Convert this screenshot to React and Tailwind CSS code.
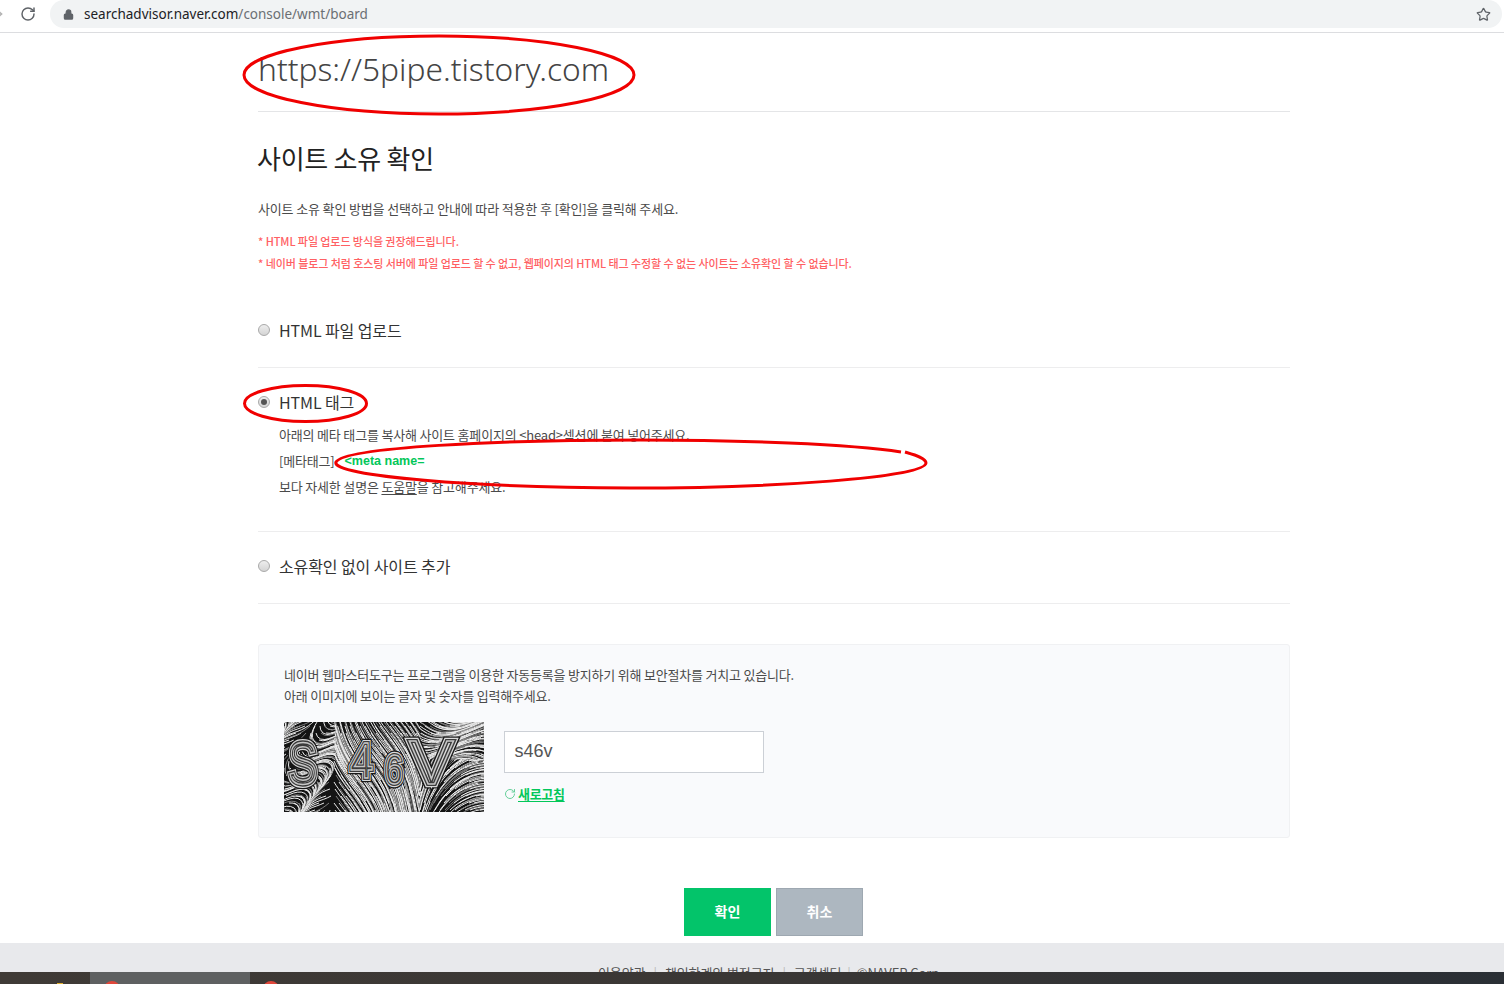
import { Lock, RotateCw, Star, ArrowRight } from 'lucide-react';

const font = { kr: "font-['Noto_Sans_CJK_KR','Noto_Sans',sans-serif]" };

// flow-field lines for the captcha picture
function captchaLines() {
  const lines = [];
  const angle = (x, y) => {
    if (x < 50) return 1.2 + 1.6 * Math.sin(x / 13 + y / 16);
    if (x > 135) {
      if (y < 38) return 0.1 + 0.5 * Math.sin(x / 18 + y / 14);
      return -1.35 + (x - 135) / 50;
    }
    return 1.15 + 0.22 * Math.sin(x / 24 + y / 34);
  };
  for (let gx = -10; gx < 210; gx += 5) {
    for (let gy = -10; gy < 100; gy += 7) {
      let x = gx + (gy % 3);
      let y = gy;
      let d = `M${x} ${y}`;
      for (let i = 0; i < 12; i++) {
        const a = angle(x, y);
        x += Math.cos(a) * 4;
        y += Math.sin(a) * 4;
        d += `L${x.toFixed(1)} ${y.toFixed(1)}`;
      }
      lines.push(d);
    }
  }
  return lines;
}

function Captcha() {
  const lines = captchaLines();
  const glyphs = [
    ['S', 4, 62, 1, 1.35, 44],
    ['4', 66, 56, 1, 1.2, 42],
    ['6', 101, 62, 1, 1.3, 32],
    ['V', 125, 62, 1.4, 1.3, 48],
  ];
  return (
    <svg width="200" height="90" viewBox="0 0 200 90" className="shrink-0 bg-[#141414]">
      {lines.map((d, i) => (
        <path key={i} d={d} fill="none" stroke={i % 3 === 0 ? '#7d7d7d' : '#ececec'} strokeWidth="1" />
      ))}
      {glyphs.map(([c, x, y, sx, sy, s]) => (
        <g key={c} transform={`translate(${x} ${y}) scale(${sx} ${sy})`} opacity="0.98" fontFamily="'Liberation Sans', sans-serif" fontSize={s} fill="none">
          <text stroke="#161616" strokeWidth="7">{c}</text>
          <text stroke="#dcdcdc" strokeWidth="5">{c}</text>
          <text stroke="#3a3a3a" strokeWidth="3.2">{c}</text>
          <text stroke="#c8c8c8" strokeWidth="1.1">{c}</text>
        </g>
      ))}
    </svg>
  );
}

function Radio({ checked }) {
  return (
    <span className="w-3 h-3 rounded-full border border-[#a9a9a9] bg-gradient-to-b from-[#eeeeee] to-[#d4d4d4] flex items-center justify-center shrink-0">
      {checked && <span className="w-1.5 h-1.5 rounded-full bg-[#555]" />}
    </span>
  );
}

function Option({ label, checked }) {
  return (
    <div className="flex items-center gap-[9px] h-6">
      <Radio checked={checked} />
      <span className="text-[16px] tracking-[-0.1px] text-[#333]">{label}</span>
    </div>
  );
}

export default function App() {
  return (
    <div className={`relative h-[984px] overflow-hidden bg-white ${font.kr}`}>
      {/* browser bar */}
      <div className="h-[33px] border-b border-[#dcdde0] flex items-start">
        <ArrowRight size={16} className="text-[#b5b5b5] -ml-[11px] mt-[6px]" />
        <RotateCw size={16} strokeWidth={2.2} className="text-[#5f6368] ml-[15px] mt-[6px]" />
        <div className="ml-[14px] w-[1452px] h-7 rounded-[14px] bg-[#f1f3f4] flex items-center pl-[13px] pr-[11px]">
          <Lock size={11} strokeWidth={2.6} className="text-[#5f6368] fill-[#5f6368]" />
          <span className="ml-[10px] mt-[1px] text-[13.5px] font-['Noto_Sans',sans-serif] text-[#202124]">
            searchadvisor.naver.com<span className="text-[#6b6f73]">/console/wmt/board</span>
          </span>
          <Star size={15} strokeWidth={2} className="ml-auto text-[#5f6368]" />
        </div>
      </div>

      <main className="ml-[258px] w-[1032px]">
        <div className="h-[79px] border-b border-[#e4e5e7] pt-[12px]">
          <h1 className="text-[31.7px] leading-[48px] font-light font-['Noto_Sans',sans-serif] text-[#444]">https://5pipe.tistory.com</h1>
        </div>

        <h2 className="-ml-[1px] mt-[27px] text-[26px] leading-[38px] tracking-[-0.25px] text-[#222]">사이트 소유 확인</h2>
        <p className="mt-[22px] text-[13px] leading-[20px] tracking-[-0.15px] text-[#4a4a4a]">
          사이트 소유 확인 방법을 선택하고 안내에 따라 적용한 후 [확인]을 클릭해 주세요.
        </p>
        <div className="mt-[11px] text-[11px] font-medium leading-[22px] tracking-[-0.08px] text-[#ff6063]">
          <p>* HTML 파일 업로드 방식을 권장해드립니다.</p>
          <p>* 네이버 블로그 처럼 호스팅 서버에 파일 업로드 할 수 없고, 웹페이지의 HTML 태그 수정할 수 없는 사이트는 소유확인 할 수 없습니다.</p>
        </div>

        <div className="mt-[44px] pb-[25px] border-b border-[#ededee]">
          <Option label="HTML 파일 업로드" />
        </div>

        <div className="pt-[22px] pb-[31px] border-b border-[#ededee]">
          <Option label="HTML 태그" checked />
          <div className="ml-[21px] mt-[8px] text-[13px] leading-[26px] tracking-[-0.18px] text-[#4a4a4a]">
            <p>아래의 메타 태그를 복사해 사이트 홈페이지의 &lt;head&gt;섹션에 붙여 넣어주세요.</p>
            <p className="flex gap-[10px]">
              <span>[메타태그]</span>
              <span className="font-['Liberation_Sans',sans-serif] text-[12.5px] font-bold tracking-normal text-[#03c75a]">&lt;meta name=</span>
            </p>
            <p>
              보다 자세한 설명은 <span className="underline underline-offset-2">도움말</span>을 참고해주세요.
            </p>
          </div>
        </div>

        <div className="pt-[22px] pb-[25px] border-b border-[#ededee]">
          <Option label="소유확인 없이 사이트 추가" />
        </div>

        <section className="mt-[40px] h-[194px] rounded-[3px] border border-[#f0f1f3] bg-[#f9fafc] pl-[25px] pt-[19px]">
          <p className="text-[13px] leading-[21px] tracking-[-0.2px] text-[#4a4a4a]">
            네이버 웹마스터도구는 프로그램을 이용한 자동등록을 방지하기 위해 보안절차를 거치고 있습니다.
            <br />
            아래 이미지에 보이는 글자 및 숫자를 입력해주세요.
          </p>
          <div className="mt-[16px] flex gap-5">
            <Captcha />
            <div className="pt-[9px]">
              <div className="w-[260px] h-[42px] border border-[#ccd0d6] bg-white flex items-center pl-[9.5px] pb-[1px] font-['Liberation_Sans',sans-serif] text-[18px] text-[#555]">
                s46v
              </div>
              <a className="mt-[11px] flex items-center gap-[2px] text-[13px] font-bold tracking-[-0.3px] text-[#03c75a]">
                <RotateCw size={12} className="text-[#66cf9a]" />
                <span className="underline underline-offset-2">새로고침</span>
              </a>
            </div>
          </div>
        </section>
      </main>

      <div className="mt-[50px] ml-[684px] flex gap-[5px] text-[14px] font-bold">
        <button className="w-[87px] h-12 pb-[2px] bg-[#03c46a] text-white">확인</button>
        <button className="w-[87px] h-12 pb-[2px] bg-[#adb7c0] border border-[#9ea8b1] text-white">취소</button>
      </div>

      <footer className="mt-[7px] h-[60px] bg-[#e8e9ec] flex items-start pl-[598px] pt-[20px] text-[13px] leading-[19px] tracking-[-0.1px] text-[#555]">
        <span>이용약관</span>
        <span className="mx-[8px] text-[#bbb]">|</span>
        <span>책임한계와 법적고지</span>
        <span className="mx-[8px] text-[#bbb]">|</span>
        <span>고객센터</span>
        <span className="mx-[6px] text-[#bbb]">|</span>
        <span>©NAVER Corp.</span>
      </footer>

      {/* hand-drawn red marks over the page */}
      <svg className="absolute inset-0 pointer-events-none" width="1504" height="984" fill="none" stroke="#f00000" strokeWidth="3">
        <ellipse cx="439" cy="75" rx="195" ry="39" />
        <ellipse cx="305.500" cy="403.500" rx="61" ry="18" />
        <path d="M901 452 C 850 444 740 440 640 440 C 500 440 345 447 336 462 C 330 476 480 488 630 488 C 770 488 925 478 926 463 C 926 458 915 455 905 452" />
      </svg>

      {/* desktop taskbar, cut off at the bottom of the capture */}
      <div className="absolute left-0 right-0 bottom-0 h-3 bg-gradient-to-r from-[#3f3a36] via-[#3a3735] to-[#2a2f35] flex">
        <span className="ml-[57px] mt-[11px] w-[6px] h-[1px] bg-[#e0b030]" />
        <div className="ml-[27px] w-[160px] bg-[#5e6061] relative">
          <span className="absolute left-[14px] top-[9px] w-4 h-4 rounded-full bg-[#e0463a]" />
        </div>
        <span className="ml-[13px] mt-[9px] w-4 h-4 rounded-full bg-[#e0463a]" />
      </div>
    </div>
  );
}
